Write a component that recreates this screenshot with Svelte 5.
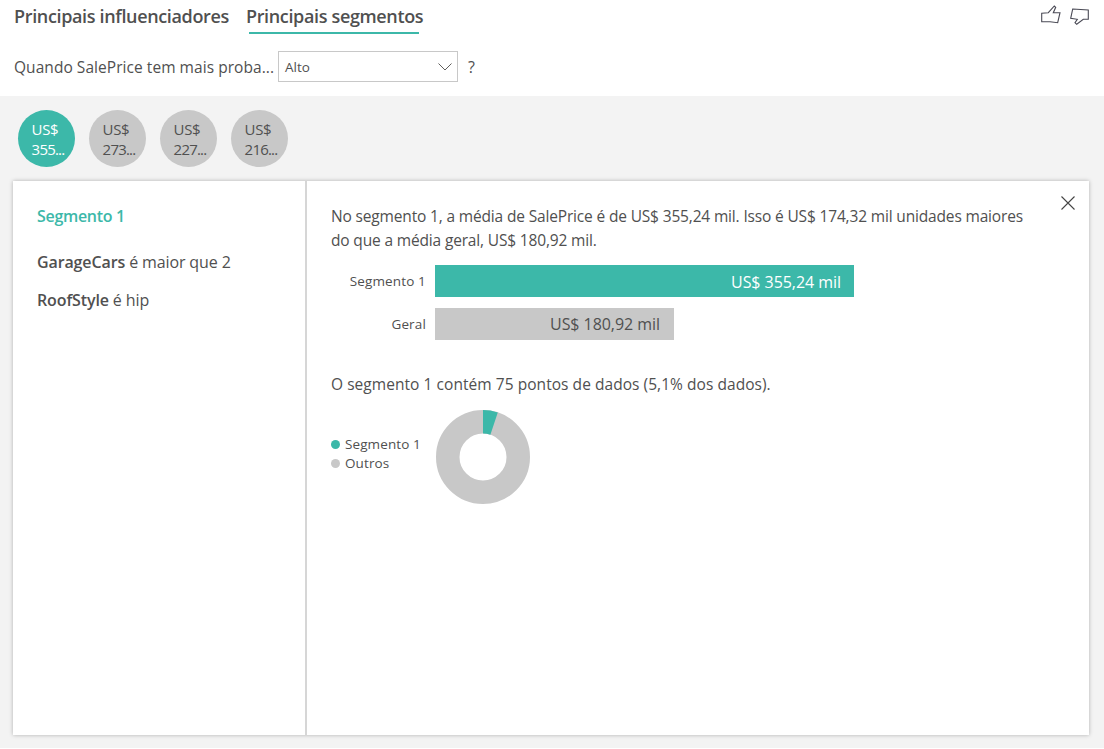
<script>
	const circles = [
		{ top: 'US$', bottom: '355...', active: true },
		{ top: 'US$', bottom: '273...' },
		{ top: 'US$', bottom: '227...' },
		{ top: 'US$', bottom: '216...' }
	]
</script>

<div class="page">
	<header>
		<div class="tabs">
			<span class="tab">Principais influenciadores</span>
			<span class="tab active">Principais segmentos</span>
			<div class="thumbs">
				<svg width="22" height="22" viewBox="0 0 22 22" fill="none" stroke="#4a4a55" stroke-width="1.1">
					<path d="M1.7 9.3L8.3 8.7 14.3 2 15.7 3.3 13.3 8.7H20L17.7 18.7 10 17.7H1.7z" />
				</svg>
				<svg width="22" height="22" viewBox="0 0 22 22" fill="none" stroke="#4a4a55" stroke-width="1.1">
					<path d="M3.7 5L19.3 6V15.3H14.3L7.7 20.3 6 18.7 8.3 15.3 1.7 14.3z" />
				</svg>
			</div>
		</div>
		<div class="filter">
			<span class="label">Quando SalePrice tem mais proba...</span>
			<div class="select">
				<span>Alto</span>
				<svg width="14" height="8" viewBox="0 0 14 8" fill="none" stroke="#605e5c" stroke-width="1">
					<path d="M.5.5L7 7l6.5-6.5" />
				</svg>
			</div>
			<span class="help">?</span>
		</div>
	</header>

	<main>
		<div class="circles">
			{#each circles as c}
				<div class="circle" class:active={c.active}>
					<div class="circle-text">
						<span class="unit">{c.top}</span>
						<span class="value">{c.bottom}</span>
					</div>
				</div>
			{/each}
		</div>

		<section class="card">
			<aside>
				<h3>Segmento 1</h3>
				<p><strong>GarageCars</strong> é maior que 2</p>
				<p><strong>RoofStyle</strong> é hip</p>
			</aside>
			<div class="detail">
				<button class="close" aria-label="Fechar">
					<svg width="14" height="14" viewBox="0 0 14 14" stroke="#444" stroke-width="1.1">
						<path d="M.5.5l13 13M13.5.5l-13 13" />
					</svg>
				</button>
				<p class="summary">
					No segmento 1, a média de SalePrice é de US$ 355,24 mil. Isso é US$ 174,32 mil unidades maiores
					do que a média geral, US$ 180,92 mil.
				</p>
				<div class="bars">
					<div class="row">
						<span class="bar-label">Segmento 1</span>
						<div class="bar teal">US$ 355,24 mil</div>
					</div>
					<div class="row">
						<span class="bar-label">Geral</span>
						<div class="bar gray">US$ 180,92 mil</div>
					</div>
				</div>
				<p class="points">O segmento 1 contém 75 pontos de dados (5,1% dos dados).</p>
				<div class="chart">
					<div class="legend">
						<div><i class="dot teal-dot"></i>Segmento 1</div>
						<div><i class="dot gray-dot"></i>Outros</div>
					</div>
					<svg width="96" height="96" viewBox="0 0 96 96">
						<circle cx="48" cy="48" r="35.25" fill="none" stroke="#c8c8c8" stroke-width="23.5" />
						<circle
							cx="48"
							cy="48"
							r="35.25"
							fill="none"
							stroke="#3cb8a9"
							stroke-width="23.5"
							stroke-dasharray="11.3 210"
							transform="rotate(-90 48 48)"
						/>
					</svg>
				</div>
			</div>
		</section>
	</main>
</div>

<style>
	:global(body) {
		margin: 0;
		background: #fff;
	}

	.page {
		width: 1104px;
		height: 748px;
		display: flex;
		flex-direction: column;
		font-family: 'Open Sans', 'Noto Sans', sans-serif;
		color: #505050;
		overflow: hidden;
	}

	header {
		height: 96px;
		flex: none;
		box-sizing: border-box;
	}

	.tabs {
		display: flex;
		height: 36px;
		padding-left: 14px;
		gap: 17px;
	}

	.tab {
		font-size: 18px;
		font-weight: 600;
		letter-spacing: -0.35px;
		line-height: 33px;
		height: 36px;
		box-sizing: border-box;
		white-space: nowrap;
	}

	.tab.active {
		position: relative;
	}

	.tab.active::after {
		content: '';
		position: absolute;
		left: 3px;
		right: 4px;
		bottom: 2px;
		height: 2px;
		background: #3cb8a9;
	}

	.thumbs {
		margin-left: auto;
		margin-right: 13px;
		display: flex;
		gap: 7px;
		padding-top: 4px;
	}

	.filter {
		display: flex;
		align-items: center;
		margin-top: 15px;
		padding-left: 14px;
		height: 31px;
	}

	.label {
		font-size: 15.5px;
		letter-spacing: 0.05px;
		width: 264px;
		white-space: nowrap;
	}

	.select {
		width: 180px;
		height: 31px;
		box-sizing: border-box;
		border: 1px solid #c8c8c8;
		display: flex;
		align-items: center;
		justify-content: space-between;
		padding: 0 5px 0 6px;
		font-size: 13.5px;
	}

	.help {
		margin-left: 10px;
		font-size: 16px;
	}

	main {
		flex: 1;
		background: #f3f3f3;
		padding: 14px 15px 13px 13px;
		display: flex;
		flex-direction: column;
		min-height: 0;
	}

	.circles {
		display: flex;
		gap: 14px;
		padding-left: 5px;
		height: 57px;
		flex: none;
	}

	.circle {
		width: 57px;
		height: 57px;
		border-radius: 50%;
		background: #c8c8c8;
		display: flex;
		align-items: center;
		justify-content: center;
		font-size: 15px;
		line-height: 20px;
		color: #505050;
	}

	.circle.active {
		background: #3cb8a9;
		color: #fff;
	}

	.circle-text {
		display: flex;
		flex-direction: column;
		align-items: flex-start;
		padding: 1px 0 0 3px;
	}

	.unit {
		letter-spacing: -0.4px;
	}

	.value {
		letter-spacing: -0.8px;
	}

	.card {
		margin-top: 14px;
		flex: 1;
		background: #fff;
		display: flex;
		box-shadow: 0 0 4px rgba(0, 0, 0, 0.28);
		min-height: 0;
	}

	aside {
		width: 294px;
		flex: none;
		box-sizing: border-box;
		border-right: 2px solid #d6d6d6;
		padding: 23px 0 0 24px;
	}

	aside h3 {
		margin: 0 0 22px;
		font-size: 16px;
		font-weight: 600;
		letter-spacing: -0.3px;
		line-height: 24px;
		color: #3cb8a9;
	}

	aside p {
		margin: 0 0 14px;
		font-size: 16px;
		letter-spacing: -0.12px;
		line-height: 24px;
	}

	aside strong {
		font-weight: 600;
	}

	.detail {
		flex: 1;
		position: relative;
		padding: 23px 0 0 24px;
	}

	.close {
		position: absolute;
		top: 15px;
		right: 14px;
		padding: 0;
		border: 0;
		background: none;
		line-height: 0;
	}

	.summary {
		margin: 0;
		width: 700px;
		font-size: 15.5px;
		letter-spacing: -0.16px;
		line-height: 24px;
	}

	.bars {
		margin-top: 13px;
		display: flex;
		flex-direction: column;
		gap: 11px;
	}

	.row {
		display: flex;
		align-items: center;
	}

	.bar-label {
		width: 95px;
		text-align: right;
		font-size: 13.5px;
		letter-spacing: 0.15px;
		margin-right: 9px;
	}

	.bar {
		height: 32px;
		box-sizing: border-box;
		display: flex;
		align-items: center;
		justify-content: flex-end;
		font-size: 16px;
		letter-spacing: -0.05px;
		padding: 0 13px 0 0;
	}

	.bar.teal {
		width: 419px;
		background: #3cb8a9;
		color: #fff;
		padding-top: 1px;
	}

	.bar.gray {
		width: 239px;
		background: #c8c8c8;
		padding-right: 14px;
	}

	.points {
		margin: 32px 0 0;
		font-size: 15.5px;
		letter-spacing: 0.05px;
		line-height: 24px;
	}

	.chart {
		margin-top: 13px;
		display: flex;
		align-items: center;
	}

	.legend {
		width: 104px;
		font-size: 13.5px;
		letter-spacing: 0.1px;
		line-height: 19px;
		margin-bottom: 6px;
	}

	.dot {
		display: inline-block;
		width: 9px;
		height: 9px;
		border-radius: 50%;
		margin-right: 5px;
	}

	.teal-dot {
		background: #3cb8a9;
	}

	.gray-dot {
		background: #c8c8c8;
	}
</style>
